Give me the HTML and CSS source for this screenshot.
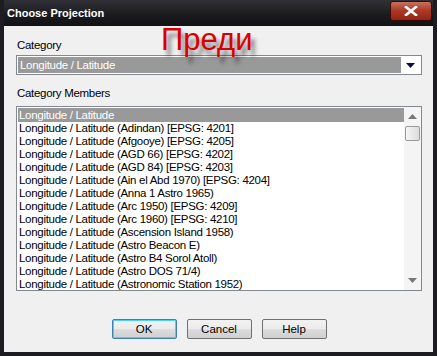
FILE: index.html
```html
<!DOCTYPE html>
<html lang="bg">
<head>
    <meta charset="UTF-8">
    <title>Choose Projection</title>
    <link rel="stylesheet" href="styles.css">
</head>
<body>
    <div class="window">
        <div class="titlebar">
            <span class="title">Choose Projection</span>
            <span class="close">
                <svg width="14" height="10" viewBox="0 0 14 10">
                    <path d="M2 1 L12 9 M12 1 L2 9" stroke="#fff" stroke-width="2.6" stroke-linecap="square"/>
                </svg>
            </span>
        </div>
        <div class="client">
            <div class="stamp">Преди</div>

            <div class="label">Category</div>
            <div class="combo">
                <div class="combo-value">Longitude / Latitude</div>
                <div class="combo-arrow">
                    <svg width="9" height="5" viewBox="0 0 9 5"><path d="M0 0 H9 L4.5 5 Z" fill="#0a0a50"/></svg>
                </div>
            </div>

            <div class="label members">Category Members</div>
            <div class="listbox">
                <ul class="items">
                    <li class="selected">Longitude / Latitude</li>
                    <li>Longitude / Latitude (Adindan) [EPSG: 4201]</li>
                    <li>Longitude / Latitude (Afgooye) [EPSG: 4205]</li>
                    <li>Longitude / Latitude (AGD 66) [EPSG: 4202]</li>
                    <li>Longitude / Latitude (AGD 84) [EPSG: 4203]</li>
                    <li>Longitude / Latitude (Ain el Abd 1970) [EPSG: 4204]</li>
                    <li>Longitude / Latitude (Anna 1 Astro 1965)</li>
                    <li>Longitude / Latitude (Arc 1950) [EPSG: 4209]</li>
                    <li>Longitude / Latitude (Arc 1960) [EPSG: 4210]</li>
                    <li>Longitude / Latitude (Ascension Island 1958)</li>
                    <li>Longitude / Latitude (Astro Beacon E)</li>
                    <li>Longitude / Latitude (Astro B4 Sorol Atoll)</li>
                    <li>Longitude / Latitude (Astro DOS 71/4)</li>
                    <li>Longitude / Latitude (Astronomic Station 1952)</li>
                </ul>
                <div class="scrollbar">
                    <div class="sb-arrow">
                        <svg width="9" height="5" viewBox="0 0 9 5"><path d="M4.5 0 L9 5 H0 Z" fill="#777"/></svg>
                    </div>
                    <div class="sb-thumb"></div>
                    <div class="sb-track"></div>
                    <div class="sb-arrow">
                        <svg width="9" height="5" viewBox="0 0 9 5"><path d="M0 0 H9 L4.5 5 Z" fill="#777"/></svg>
                    </div>
                </div>
            </div>

            <div class="buttons">
                <button class="btn default">OK</button>
                <button class="btn">Cancel</button>
                <button class="btn">Help</button>
            </div>
        </div>
    </div>
</body>
</html>
```

FILE: styles.css
```css
body {
    margin: 0;
    background: #111;
    font-family: "Liberation Sans", Arial, sans-serif;
    font-size: 11.5px;
    letter-spacing: -0.3px;
    color: #000;
}
.window {
    width: 437px;
    height: 356px;
    box-sizing: border-box;
    background: #1c1c21;
    padding: 0 4px 4px 4px;
    display: flex;
    flex-direction: column;
}
.titlebar {
    height: 26px;
    display: flex;
    align-items: center;
    justify-content: space-between;
    padding: 0 1px 0 3px;
    background: linear-gradient(#303036, #1a1a1e 60%, #121214);
}
.title {
    color: #fff;
    font-family: "Liberation Sans", Arial, sans-serif;
    font-weight: bold;
    font-size: 11px;
    letter-spacing: 0;
    margin-top: -1px;
}
.close {
    width: 40px;
    height: 18px;
    margin-top: -4px;
    border: 1px solid #3a0a06;
    border-radius: 3px;
    background: linear-gradient(#c9705f, #ad3a26 45%, #922512);
    display: flex;
    align-items: center;
    justify-content: center;
}
.client {
    flex: 1;
    position: relative;
    background: #f0f0f0;
    padding: 12px 11px 0 12px;
}
.stamp {
    position: absolute;
    left: 157px;
    top: -4px;
    font-family: "Liberation Sans", Arial, sans-serif;
    font-size: 31px;
    letter-spacing: 0;
    color: #d80000;
    text-shadow: 4px 6px 4px rgba(0, 0, 0, 0.5);
    z-index: 2;
}
.label {
    height: 14px;
    line-height: 14px;
    padding-left: 1px;
}
.label.members {
    margin-top: 11px;
}
.combo {
    margin-top: 3px;
    height: 20px;
    box-sizing: border-box;
    border: 1px solid #828790;
    background: #fff;
    padding: 1px;
    display: flex;
}
.combo-value {
    flex: 1;
    background: #999;
    color: #fff;
    padding-left: 2px;
    line-height: 16px;
}
.combo-arrow {
    width: 19px;
    display: flex;
    align-items: center;
    justify-content: center;
}
.listbox {
    margin-top: 6px;
    height: 185px;
    box-sizing: border-box;
    border: 1px solid #828790;
    background: #fff;
    display: flex;
}
.items {
    flex: 1;
    list-style: none;
    margin: 0;
    padding: 1px 0 0 1px;
    overflow: hidden;
}
.items li {
    height: 13px;
    line-height: 13px;
    padding-left: 1px;
    white-space: nowrap;
}
.items li.selected {
    height: 14px;
    line-height: 14px;
    background: #999;
    color: #fff;
}
.scrollbar {
    width: 17px;
    background: #f4f4f4;
    display: flex;
    flex-direction: column;
    align-items: center;
}
.sb-arrow {
    height: 19px;
    display: flex;
    align-items: center;
    justify-content: center;
}
.sb-thumb {
    width: 15px;
    height: 15px;
    box-sizing: border-box;
    border: 1px solid #9a9a9a;
    border-radius: 2px;
    background: linear-gradient(90deg, #f6f6f6, #dcdcdc);
}
.sb-track {
    flex: 1;
}
.buttons {
    display: flex;
    justify-content: center;
    gap: 10px;
    margin-top: 28px;
}
.btn {
    width: 65px;
    height: 20px;
    box-sizing: border-box;
    border: 1px solid #707070;
    border-radius: 2px;
    background: linear-gradient(#f2f2f2, #ebebeb 50%, #dddddd 51%, #cfcfcf);
    font-family: "Liberation Sans", Arial, sans-serif;
    font-size: 11.5px;
    padding: 0;
}
.btn.default {
    border-color: #3c7fb1;
    box-shadow: inset 0 0 0 1px #48d2fb;
}
```
